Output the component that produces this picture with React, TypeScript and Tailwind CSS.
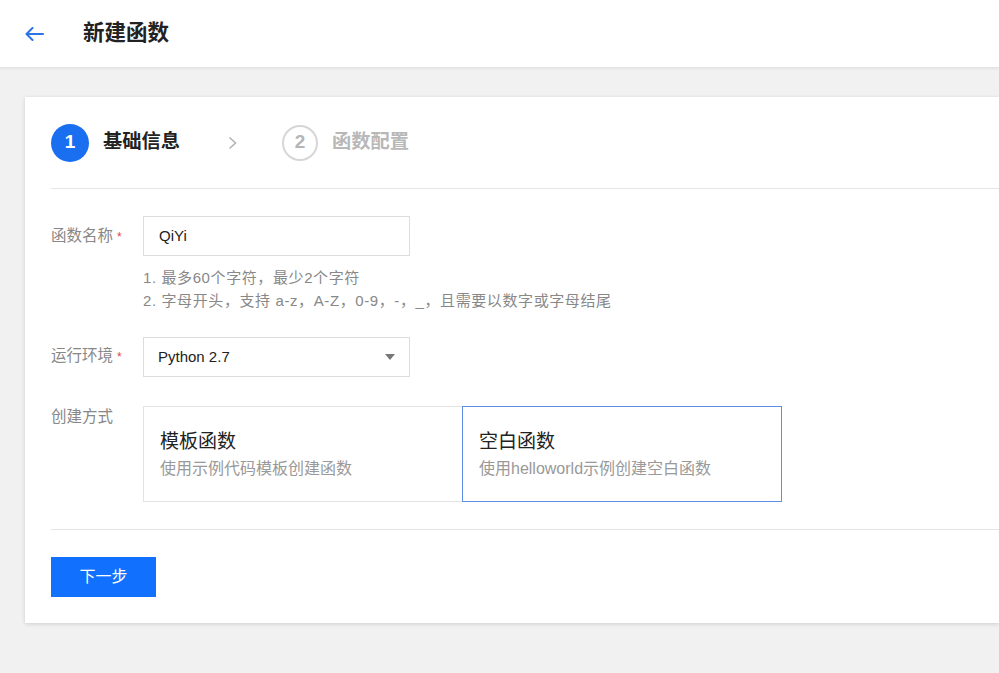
import React from 'react';

const font = { fontFamily: '"Liberation Sans", "Noto Sans CJK SC", sans-serif' };

const Label: React.FC<{ text: string; required?: boolean }> = ({ text, required }) => (
    <div className="w-[92px] shrink-0 text-[15.5px] text-[#888] leading-[20px]">
        {text}
        {required && <span className="text-[#e54545] ml-1 text-[12px]">*</span>}
    </div>
);

const MethodCard: React.FC<{ title: string; desc: string; active?: boolean }> = ({ title, desc, active }) => (
    <div
        className={`w-[320px] h-[96px] px-[16px] pt-[21px] bg-white border ${
            active ? 'border-[#5d8fe6] -ml-px' : 'border-[#e2e2e2]'
        }`}
    >
        <div className="text-[19px] text-[#222] leading-[28px]">{title}</div>
        <div className="text-[16px] text-[#999] leading-[22px] mt-[2px]">{desc}</div>
    </div>
);

export default function App() {
    return (
        <div className="w-[999px] h-[673px] bg-[#f1f1f1] overflow-hidden" style={font}>
            <div className="h-[68px] bg-white border-b border-[#e3e3e3] shadow-[0_1px_3px_rgba(0,0,0,0.06)] flex items-center pl-[25px]">
                <svg width="19" height="14" viewBox="0 0 19 14" fill="none" stroke="#2a74e6" strokeWidth="2" strokeLinecap="round" strokeLinejoin="round">
                    <path d="M18 7H1.5M7.5 1L1.5 7l6 6" />
                </svg>
                <div className="ml-[39px] text-[21.5px] font-bold text-[#222]">新建函数</div>
            </div>

            <div className="pl-[25px] pt-[29px]">
                <div className="h-[526px] bg-white shadow-[0_1px_4px_rgba(0,0,0,0.15)] pl-[26px]">
                    <div className="flex items-center pt-[27px] h-[92px] border-b border-[#e5e5e5] pb-[27px]">
                        <div className="w-[38px] h-[38px] rounded-full bg-[#1a6ff0] text-white flex items-center justify-center text-[19px] font-bold">1</div>
                        <div className="ml-[14px] text-[19.25px] font-bold text-[#222]">基础信息</div>
                        <svg className="ml-[48px]" width="9" height="14" viewBox="0 0 9 14" fill="none" stroke="#b3b3b3" strokeWidth="1.6">
                            <path d="M1.5 1.5l6 5.5-6 5.5" />
                        </svg>
                        <div className="ml-[45px] w-[36px] h-[36px] rounded-full border-2 border-[#d6d6d6] text-[#b5b5b5] flex items-center justify-center text-[19px] font-bold">2</div>
                        <div className="ml-[14px] text-[19.25px] font-bold text-[#b8b8b8]">函数配置</div>
                    </div>

                    <div className="pt-[27px]">
                        <div className="flex">
                            <div className="pt-[10px]"><Label text="函数名称" required /></div>
                            <div>
                                <div className="w-[267px] h-[40px] border border-[#dcdcdc] flex items-center pl-[15px] text-[15px] text-[#222]">QiYi</div>
                                <div className="mt-[10px] text-[15px] tracking-[0.6px] text-[#888] leading-[23px]">
                                    <div>1. 最多60个字符，最少2个字符</div>
                                    <div>2. 字母开头，支持 a-z，A-Z，0-9，-，_，且需要以数字或字母结尾</div>
                                </div>
                            </div>
                        </div>

                        <div className="flex mt-[25px]">
                            <div className="pt-[9px]"><Label text="运行环境" required /></div>
                            <div className="w-[267px] h-[40px] border border-[#dcdcdc] flex items-center justify-between pl-[14px] pr-[14px] text-[15px] text-[#222]">
                                <span>Python 2.7</span>
                                <svg width="10" height="6" viewBox="0 0 10 6"><path d="M0 0h10L5 6z" fill="#777" /></svg>
                            </div>
                        </div>

                        <div className="flex mt-[29px]">
                            <div className="pt-[1px]"><Label text="创建方式" /></div>
                            <div className="flex">
                                <MethodCard title="模板函数" desc="使用示例代码模板创建函数" />
                                <MethodCard title="空白函数" desc="使用helloworld示例创建空白函数" active />
                            </div>
                        </div>
                    </div>

                    <div className="mt-[27px] border-t border-[#e5e5e5] pt-[27px]">
                        <button className="w-[105px] h-[40px] bg-[#1170fd] text-white text-[16px]">下一步</button>
                    </div>
                </div>
            </div>
        </div>
    );
}
